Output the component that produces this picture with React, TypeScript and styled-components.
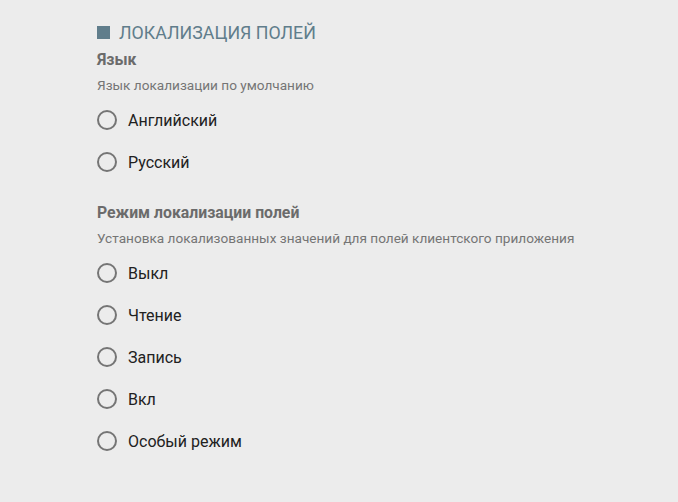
import React from 'react';
import styled, { createGlobalStyle } from 'styled-components';

const GlobalStyle = createGlobalStyle`
  html, body {
    margin: 0;
    padding: 0;
    background: #ececec;
    font-family: Roboto, 'Noto Sans', sans-serif;
  }
`;

const Page = styled.div`
  min-height: 502px;
  padding: 20px 0 0 97px;
  box-sizing: border-box;
  background: #ececec;
`;

const Title = styled.div`
  display: flex;
  align-items: center;
  gap: 9px;
  height: 24px;
  font-size: 17.8px;
  color: #607d8b;
  text-transform: uppercase;
`;

const Square = styled.span`
  width: 13px;
  height: 13px;
  background: #607d8b;
`;

const Section = styled.section<{ $top: number }>`
  margin-top: ${(p) => p.$top}px;
`;

const Heading = styled.div`
  font-size: 15.8px;
  font-weight: 700;
  line-height: 20px;
  color: #6b6b6b;
`;

const Description = styled.div`
  margin-top: 6px;
  font-size: 13.6px;
  line-height: 18px;
  color: #757575;
`;

const Options = styled.div`
  margin-top: 5px;
  display: flex;
  flex-direction: column;
`;

const Option = styled.label`
  display: flex;
  align-items: center;
  gap: 11px;
  height: 42px;
  font-size: 16px;
  color: #212121;
  cursor: pointer;
`;

const Radio = styled.span`
  width: 20px;
  height: 20px;
  box-sizing: border-box;
  border: 2px solid #757575;
  border-radius: 50%;
`;

const sections = [
  {
    title: 'Язык',
    description: 'Язык локализации по умолчанию',
    options: ['Английский', 'Русский'],
    top: 6,
  },
  {
    title: 'Режим локализации полей',
    description: 'Установка локализованных значений для полей клиентского приложения',
    options: ['Выкл', 'Чтение', 'Запись', 'Вкл', 'Особый режим'],
    top: 20,
  },
];

const App = () => {
  return (
    <Page>
      <GlobalStyle />
      <Title>
        <Square />
        Локализация полей
      </Title>
      {sections.map((s) => (
        <Section key={s.title} $top={s.top}>
          <Heading>{s.title}</Heading>
          <Description>{s.description}</Description>
          <Options>
            {s.options.map((o) => (
              <Option key={o}>
                <Radio />
                {o}
              </Option>
            ))}
          </Options>
        </Section>
      ))}
    </Page>
  );
};

export default App;
